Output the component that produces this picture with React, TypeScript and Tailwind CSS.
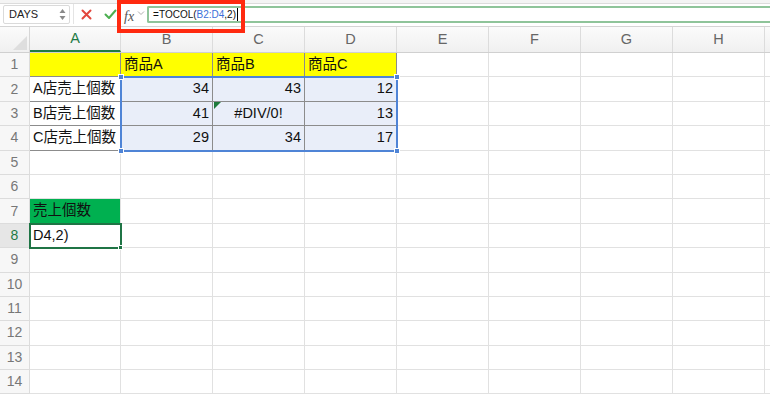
import React from "react";

const colCls = ["w-[91px]", "w-[92px]", "w-[92px]", "w-[92px]", "w-[92px]", "w-[92px]", "w-[92px]", "w-[92px]", "w-[20px]"];
const letters = ["A", "B", "C", "D", "E", "F", "G", "H", ""];

type CellDef = { text?: string; align?: "left" | "right" | "center"; bg?: string };

const data: Record<string, CellDef> = {
  "1,0": { bg: "bg-[#ffff00]" },
  "1,1": { text: "商品A", bg: "bg-[#ffff00]" },
  "1,2": { text: "商品B", bg: "bg-[#ffff00]" },
  "1,3": { text: "商品C", bg: "bg-[#ffff00]" },
  "2,0": { text: "A店売上個数" },
  "3,0": { text: "B店売上個数" },
  "4,0": { text: "C店売上個数" },
  "2,1": { text: "34", align: "right", bg: "bg-[#e9eef9]" },
  "2,2": { text: "43", align: "right", bg: "bg-[#e9eef9]" },
  "2,3": { text: "12", align: "right", bg: "bg-[#e9eef9]" },
  "3,1": { text: "41", align: "right", bg: "bg-[#e9eef9]" },
  "3,2": { text: "#DIV/0!", align: "center", bg: "bg-[#e9eef9]" },
  "3,3": { text: "13", align: "right", bg: "bg-[#e9eef9]" },
  "4,1": { text: "29", align: "right", bg: "bg-[#e9eef9]" },
  "4,2": { text: "34", align: "right", bg: "bg-[#e9eef9]" },
  "4,3": { text: "17", align: "right", bg: "bg-[#e9eef9]" },
  "7,0": { text: "売上個数", bg: "bg-[#00b050]" },
  "8,0": { text: "D4,2)" },
};

function Cell({ r, c }: { r: number; c: number }) {
  const d = data[`${r},${c}`] || {};
  const inTable = r >= 1 && r <= 4 && c <= 3;
  const border = inTable ? "border-[#8c8c8c]" : "border-[#e1e1e1]";
  const align = d.align === "right" ? "justify-end" : d.align === "center" ? "justify-center" : "justify-start";
  return (
    <div
      className={`${colCls[c]} shrink-0 h-full border-r border-b ${border} ${d.bg || "bg-white"} flex items-center ${align} px-[3px] overflow-hidden whitespace-nowrap text-[14.5px] text-[#111]`}
    >
      {d.text}
    </div>
  );
}

export default function App() {
  const rows = Array.from({ length: 14 }, (_, i) => i + 1);
  return (
    <div
      className="relative w-[770px] h-[394px] overflow-hidden bg-white"
      style={{ fontFamily: '"Liberation Sans", "Noto Sans CJK JP", sans-serif' }}
    >
      {/* top strip */}
      <div className="h-[4px] bg-[#f4f4f4] border-b border-[#dcdcdc]" />
      {/* formula bar */}
      <div className="h-[23px] flex items-start bg-white border-b border-[#d4d4d4]">
        <div className="ml-[3px] mt-[1px] w-[67px] h-[19px] bg-white border border-[#dadada] rounded-[2px] flex items-center pl-[5px] pr-[3px] text-[11px] text-[#222]">
          <span className="flex-1">DAYS</span>
          <svg width="7" height="13" viewBox="0 0 7 13">
            <path d="M3.5 1 L6.5 5 L0.5 5 Z" fill="#8a8a8a" />
            <path d="M3.5 12 L6.5 8 L0.5 8 Z" fill="#8a8a8a" />
          </svg>
        </div>
        <div className="w-px h-[20px] bg-[#e4e4e4] ml-[3px]" />
        <div className="ml-[7px] mt-[5px]">
          <svg width="11" height="11" viewBox="0 0 11 11">
            <path d="M1.5 1.5 L9.5 9.5 M9.5 1.5 L1.5 9.5" stroke="#e2463c" strokeWidth="2" strokeLinecap="round" />
          </svg>
        </div>
        <div className="ml-[12px] mt-[5px]">
          <svg width="13" height="11" viewBox="0 0 13 11">
            <path d="M1.5 5.5 L5 9 L11.5 1.5" stroke="#4caf50" strokeWidth="2" fill="none" strokeLinecap="round" strokeLinejoin="round" />
          </svg>
        </div>
        <div className="ml-[7px] mt-[2px] text-[14px] italic text-[#555]" style={{ fontFamily: '"Liberation Serif", serif' }}>
          fx
        </div>
        <div className="ml-[3px] mt-[6px]">
          <svg width="8" height="6" viewBox="0 0 8 6">
            <path d="M1 1.5 L4 4.5 L7 1.5" stroke="#b0b0b0" strokeWidth="1" fill="none" />
          </svg>
        </div>
        <div className="ml-[2px] mt-[2px] flex-1 h-[17px] border-y-2 border-l-2 border-[#8fc49a] rounded-l-[2px] flex items-center pl-[4px] text-[10px] text-[#111]">
          <span>=TOCOL(</span>
          <span className="text-[#3a6fd8]">B2:D4</span>
          <span>,2)</span>
          <span className="w-px h-[13px] bg-black ml-[1px]" />
        </div>
      </div>

      {/* column headers */}
      <div className="flex h-[26px] border-b border-[#d0d0d0] bg-gradient-to-b from-[#fbfbfb] to-[#f0f0f0]">
        <div className="w-[30px] shrink-0 h-full border-r border-[#d6d6d6] relative">
          <svg className="absolute right-[2px] bottom-[2px]" width="14" height="14" viewBox="0 0 14 14">
            <path d="M14 0 L14 14 L0 14 Z" fill="#dedede" />
          </svg>
        </div>
        {letters.map((l, c) => (
          <div
            key={c}
            className={`${colCls[c]} shrink-0 h-full border-r border-[#dcdcdc] flex items-center justify-center text-[14.5px] ${
              c === 0 ? "text-[#1e7a45] border-b-2 border-b-[#1e7a45]" : "text-[#666]"
            }`}
          >
            {l}
          </div>
        ))}
      </div>

      {/* rows */}
      {rows.map((r) => (
        <div key={r} className="flex h-[24.4px]">
          <div
            className={`w-[30px] shrink-0 h-full border-r border-b border-[#dcdcdc] flex items-center justify-center text-[14px] ${
              r === 8 ? "bg-[#e6e6e6] text-[#1e7a45]" : "bg-[#f7f7f7] text-[#777]"
            }`}
          >
            {r}
          </div>
          {letters.map((_, c) => (
            <Cell key={c} r={r} c={c} />
          ))}
        </div>
      ))}

      {/* selection B2:D4 */}
      <div className="absolute left-[120px] top-[76.4px] w-[278px] h-[75.2px] border-2 border-[#4f84d6] pointer-events-none">
        <div className="absolute -left-[4px] -top-[4px] w-[6px] h-[6px] bg-[#4f84d6] border border-white" />
        <div className="absolute -right-[4px] -top-[4px] w-[6px] h-[6px] bg-[#4f84d6] border border-white" />
        <div className="absolute -left-[4px] -bottom-[4px] w-[6px] h-[6px] bg-[#4f84d6] border border-white" />
        <div className="absolute -right-[4px] -bottom-[4px] w-[6px] h-[6px] bg-[#4f84d6] border border-white" />
      </div>

      {/* error indicator C3 */}
      <svg className="absolute left-[214px] top-[102px]" width="7" height="7" viewBox="0 0 7 7">
        <path d="M0 0 L7 0 L0 7 Z" fill="#1f7a3c" />
      </svg>

      {/* active cell A8 */}
      <div className="absolute left-[29px] top-[223px] w-[93px] h-[26.4px] border-2 border-[#1f7445] pointer-events-none">
        <div className="absolute -right-[3px] -bottom-[3px] w-[5px] h-[5px] bg-[#1f7445] border border-white" />
      </div>

      {/* red highlight box */}
      <div className="absolute left-[117px] top-0 w-[128px] h-[33px] border-4 border-[#ff2a10] pointer-events-none" />
    </div>
  );
}
